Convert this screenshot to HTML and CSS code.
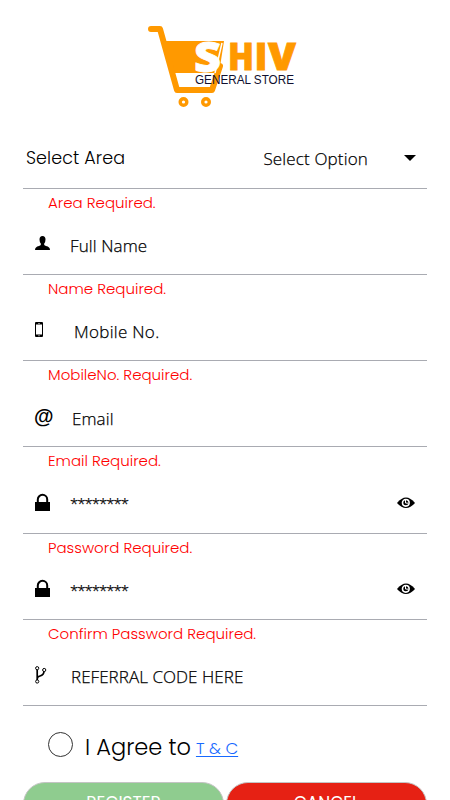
FILE: index.html
```html
<!DOCTYPE html>
<html lang="en">

<head>
    <meta charset="UTF-8">
    <meta name="viewport" content="width=device-width, initial-scale=1.0">
    <title>Shiv General Store - Register</title>
    <link rel="stylesheet" href="styles.css">
</head>

<body>
    <header class="logo-container">
        <svg class="logo" width="170" height="100" viewBox="0 0 170 100" role="img" aria-label="Shiv General Store">
            <path d="M25 26H84L79 58H34z" fill="#ff9900" />
            <path d="M11 14H20L37 75H72L80 51" fill="none" stroke="#ff9900" stroke-width="6" stroke-linecap="round" stroke-linejoin="round" />
            <circle cx="43.500" cy="87" r="3.300" fill="#fff" stroke="#ff9900" stroke-width="3.400" />
            <circle cx="66" cy="87" r="3.300" fill="#fff" stroke="#ff9900" stroke-width="3.400" />
            <path d="M82 28L75 58" stroke="#fff" stroke-width="1.500" />
            <text class="logo-s" x="54" y="57" textLength="27" lengthAdjust="spacingAndGlyphs">S</text>
            <text class="logo-name" x="88" y="55" textLength="26" lengthAdjust="spacingAndGlyphs">H</text>
            <text class="logo-name" x="114.500" y="55" textLength="13" lengthAdjust="spacingAndGlyphs">I</text>
            <text class="logo-name" x="128" y="55" textLength="28" lengthAdjust="spacingAndGlyphs">V</text>
            <text class="logo-sub" x="55" y="68.500" textLength="99" lengthAdjust="spacingAndGlyphs">GENERAL STORE</text>
        </svg>
    </header>

    <form class="register-form">
        <div class="field area">
            <label>Select Area</label>
            <div class="select">
                <span>Select Option</span>
                <svg width="12" height="6" viewBox="0 0 12 6"><path d="M0 0H12L6 6z" /></svg>
            </div>
        </div>
        <p class="error">Area Required.</p>

        <div class="field">
            <svg class="icon" width="20" height="20" viewBox="0 0 20 20"><path d="M7.500 2Q10.500 2 10.500 5.500Q10.500 8.500 9 10Q9 11.500 11 12Q15 12.800 15 16H0Q0 12.800 4 12Q6 11.500 6 10Q4.500 8.500 4.500 5.500Q4.500 2 7.500 2z" /></svg>
            <span class="placeholder">Full Name</span>
        </div>
        <p class="error">Name Required.</p>

        <div class="field">
            <svg class="icon" width="20" height="20" viewBox="0 0 20 20"><path fill-rule="evenodd" d="M1 2H7Q8 2 8 3V16Q8 17 7 17H1Q0 17 0 16V3Q0 2 1 2zM1 4.500V14.500H7V4.500zM3 3V3.600H5V3zM3.500 15.300V16.300H4.500V15.300z" /></svg>
            <span class="placeholder mobile">Mobile No.</span>
        </div>
        <p class="error">MobileNo. Required.</p>

        <div class="field">
            <span class="icon at">@</span>
            <span class="placeholder email">Email</span>
        </div>
        <p class="error">Email Required.</p>

        <div class="field">
            <svg class="icon" width="20" height="20" viewBox="0 0 20 20"><path d="M0 9H15V18H0z" /><path d="M2.800 10V6.500A4.700 4.700 0 0 1 12.200 6.500V10" fill="none" stroke="#000" stroke-width="2" /></svg>
            <span class="placeholder password">********</span>
            <svg class="eye" width="18" height="12" viewBox="0 0 18 12"><path d="M0 6Q9-5 18 6Q9 16 0 6z" /><circle cx="8.800" cy="5.800" r="3.300" fill="none" stroke="#fff" stroke-width="1.600" /><path d="M8.500 3V6L11 6.200" fill="none" stroke="#fff" /></svg>
        </div>
        <p class="error">Password Required.</p>

        <div class="field">
            <svg class="icon" width="20" height="20" viewBox="0 0 20 20"><path d="M0 9H15V18H0z" /><path d="M2.800 10V6.500A4.700 4.700 0 0 1 12.200 6.500V10" fill="none" stroke="#000" stroke-width="2" /></svg>
            <span class="placeholder password">********</span>
            <svg class="eye" width="18" height="12" viewBox="0 0 18 12"><path d="M0 6Q9-5 18 6Q9 16 0 6z" /><circle cx="8.800" cy="5.800" r="3.300" fill="none" stroke="#fff" stroke-width="1.600" /><path d="M8.500 3V6L11 6.200" fill="none" stroke="#fff" /></svg>
        </div>
        <p class="error">Confirm Password Required.</p>

        <div class="field">
            <svg class="icon" width="20" height="20" viewBox="0 0 20 20" fill="none" stroke="#000"><path d="M2.200 4V15M9 6Q9 10 5 11Q2.200 11.700 2.200 14" stroke-width="1.700" /><circle cx="2.200" cy="3.200" r="1.600" fill="#fff" /><circle cx="9.200" cy="5" r="1.600" fill="#fff" /><circle cx="2.200" cy="16.500" r="1.600" fill="#fff" /></svg>
            <span class="placeholder referral">REFERRAL CODE HERE</span>
        </div>

        <div class="terms">
            <span class="radio"></span>
            <span class="agree">I Agree to</span>
            <a href="#">T &amp; C</a>
        </div>

        <div class="buttons">
            <button type="submit" class="register">REGISTER</button>
            <button type="button" class="cancel">CANCEL</button>
        </div>
    </form>
</body>

</html>
```

FILE: styles.css
```css
body {
    font-family: Poppins, Inter, sans-serif;
    font-weight: 300;
    background-color: #fff;
    color: #000;
    margin: 0;
    height: 800px;
    overflow: hidden;
}

.logo-container {
    height: 113px;
    padding: 15px 0 0 140px;
}

.logo {
    display: block;
}

.logo-s,
.logo-name {
    font-family: "Open Sans", sans-serif;
    font-weight: 800;
    font-size: 37px;
    fill: #ff9900;
    stroke: #ff9900;
    stroke-width: 0.8px;
}

.logo-s {
    font-size: 42px;
    fill: #fff;
    stroke: #fff;
}

.logo-sub {
    font-family: "Liberation Sans", sans-serif;
    font-size: 12.5px;
    font-weight: 400;
    fill: #101030;
}

.register-form {
    margin: 0 23px;
}

.field {
    display: flex;
    align-items: center;
    box-sizing: border-box;
    height: 58.25px;
    padding: 0 12px 2px;
    border-bottom: 1px solid #a9abb2;
}

.area {
    height: 60.5px;
    justify-content: space-between;
    padding: 0 11px 0 3px;
}

.area label {
    font-size: 17.5px;
    letter-spacing: 0.1px;
}

.select {
    display: flex;
    align-items: center;
    gap: 36px;
    padding-top: 1px;
    font-family: "Open Sans", sans-serif;
    font-size: 17px;
    letter-spacing: 0.15px;
    -webkit-text-stroke: 0.25px #000;
}

.icon {
    flex: none;
    width: 20px;
    height: 20px;
}

.at {
    font-family: "Liberation Sans", sans-serif;
    font-weight: 700;
    font-size: 20px;
    line-height: 18px;
    text-indent: -1px;
}

.placeholder {
    margin-left: 15px;
    padding-top: 3px;
    font-family: "Open Sans", sans-serif;
    font-size: 17px;
    letter-spacing: 0.1px;
    white-space: nowrap;
    -webkit-text-stroke: 0.25px #000;
}

.mobile {
    margin-left: 19px;
    letter-spacing: 0.3px;
}

.email {
    margin-left: 17px;
}

.password {
    padding-top: 1px;
    font-size: 15px;
    letter-spacing: -1px;
}

.referral {
    margin-left: 16px;
    letter-spacing: 0.05px;
}

.eye {
    margin-left: auto;
}

.error {
    height: 28px;
    margin: 0;
    padding-left: 25px;
    line-height: 27px;
    font-size: 15px;
    color: #f00;
    white-space: nowrap;
}

.terms {
    display: flex;
    align-items: center;
    height: 76px;
    padding-left: 25px;
}

.radio {
    box-sizing: border-box;
    width: 25px;
    height: 25px;
    border: 1px solid #333;
    border-radius: 50%;
}

.agree {
    margin: 5px 5px 0 12px;
    font-size: 22.5px;
}

.terms a {
    margin-top: 8px;
    font-size: 16.5px;
    color: #1769ff;
    text-underline-offset: 2px;
}

.buttons {
    display: flex;
    gap: 2px;
}

.buttons button {
    box-sizing: border-box;
    width: 202px;
    height: 44px;
    padding: 0 0 3px;
    border: 1px solid #c4c4c4;
    border-radius: 22px;
    font-family: inherit;
    font-size: 17px;
    font-weight: 400;
    color: #fff;
}

.register {
    background-color: #8fcc8f;
}

.cancel {
    background-color: #e62114;
}
```
